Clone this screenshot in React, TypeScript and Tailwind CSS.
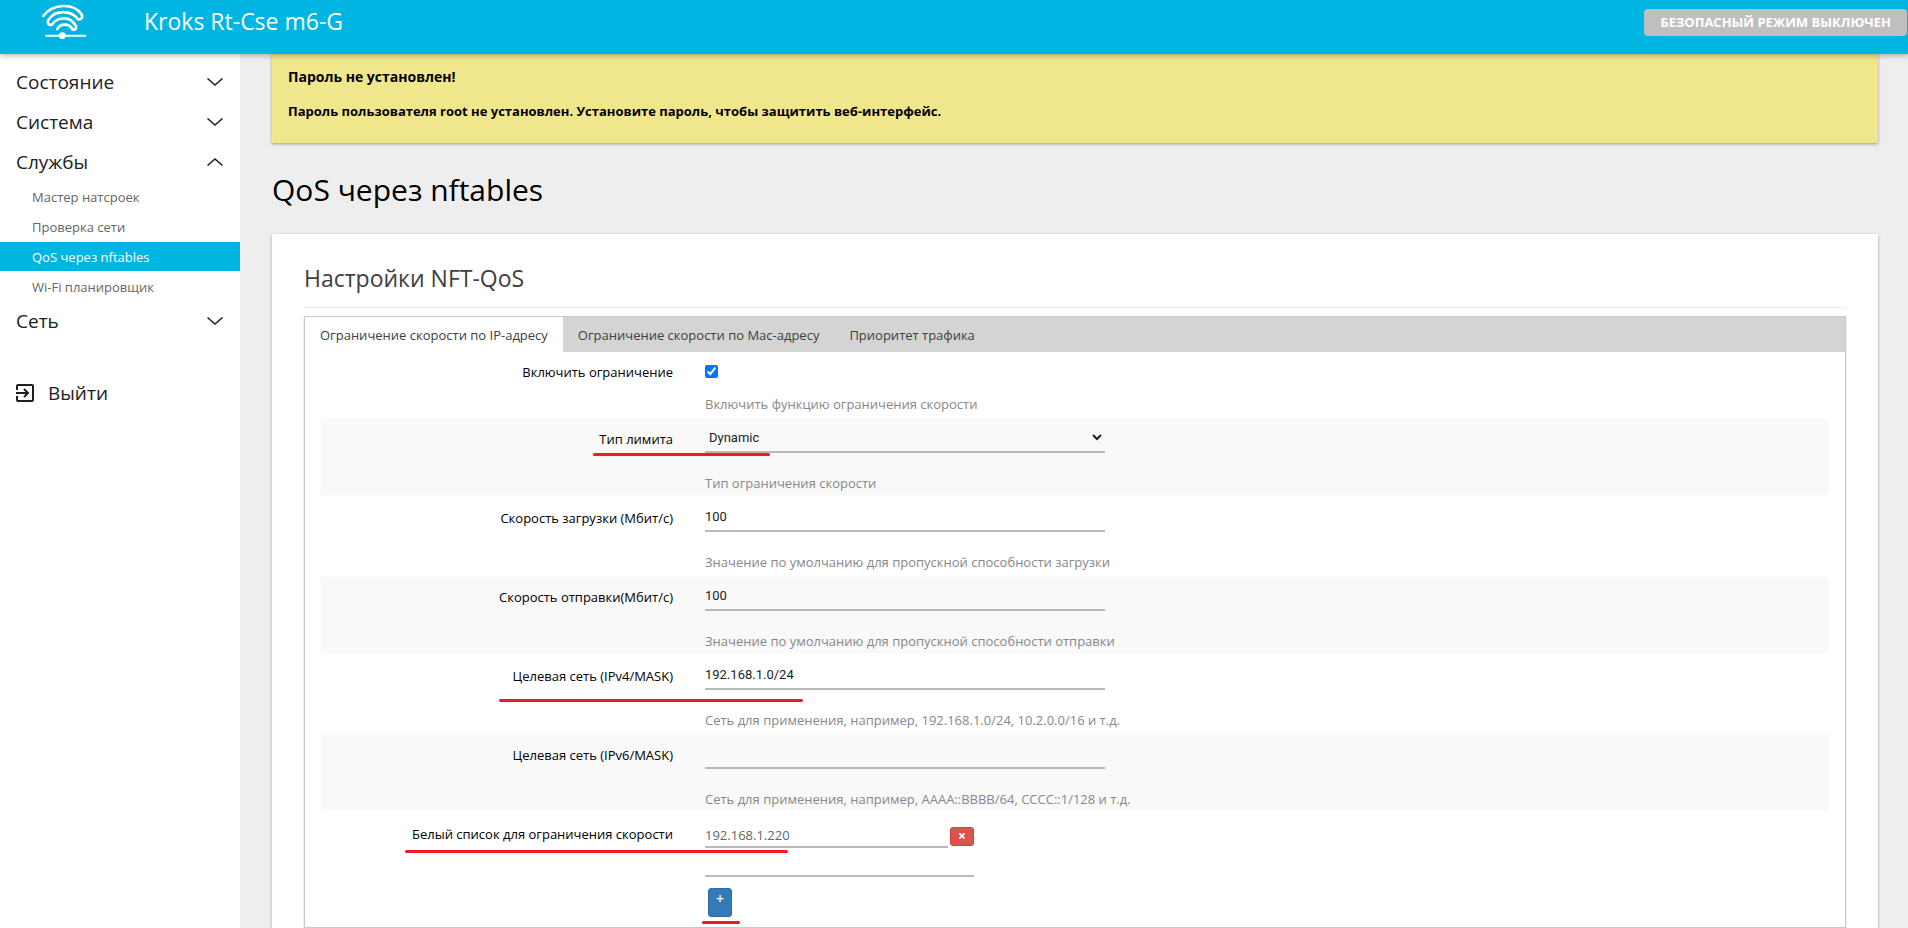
import { useState } from 'react';
import type { ReactNode } from 'react';

interface MenuSection {
  title: string;
  items?: string[];
}

const MENU: MenuSection[] = [
  { title: 'Состояние' },
  { title: 'Система' },
  { title: 'Службы', items: ['Мастер натсроек', 'Проверка сети', 'QoS через nftables', 'Wi-Fi планировщик'] },
  { title: 'Сеть' },
];

const TABS = ['Ограничение скорости по IP-адресу', 'Ограничение скорости по Mac-адресу', 'Приоритет трафика'];

const inputClass =
  'block h-8 w-full border-b-2 border-[#b9b9b9] bg-transparent pt-0.5 font-[Roboto,sans-serif] text-[13px] text-[#222] outline-none';

function Logo() {
  return (
    <svg
      width="60"
      height="44"
      viewBox="0 0 180 132"
      fill="none"
      stroke="#fff"
      strokeWidth="8"
      strokeLinecap="round"
      strokeLinejoin="round"
      aria-hidden="true"
    >
      <path d="M22 48C50 10 112 8 136 42c6 10 1 16-10 16C106 30 58 28 37 60c-5 9 0 17 11 14 15-24 50-24 65-5" />
      <path d="M113 69c12 12 8 20-3 20-10-21-38-19-46-2" />
      <path d="M30 107h118" strokeWidth="6" />
      <circle cx="79" cy="107" r="6" fill="#fff" />
    </svg>
  );
}

function Chevron({ open }: { open: boolean }) {
  return (
    <svg width="16" height="8" viewBox="0 0 16 8" fill="none" stroke="#1f1f23" strokeWidth="1.5" aria-hidden="true">
      {open ? <path d="M.5 7.5 8 1l7.500 6.500" /> : <path d="M.5.5 8 7 15.500.500" />}
    </svg>
  );
}

function ExitIcon() {
  return (
    <svg width="18" height="18" viewBox="0 0 18 18" fill="none" stroke="#1f1f23" strokeWidth="2" aria-hidden="true">
      <path d="M1 6V2q0-1 1-1h14q1 0 1 1v14q0 1-1 1H2q-1 0-1-1v-4M0 9h12M8 5l4 4-4 4" />
    </svg>
  );
}

interface RowProps {
  label: string;
  htmlFor: string;
  hint?: string;
  striped?: boolean;
  mark?: ReactNode;
  children: ReactNode;
}

function Row({ label, htmlFor, hint, striped = false, mark, children }: RowProps) {
  return (
    <div className={striped ? 'relative flex gap-8 bg-[#f9f9f9]' : 'relative flex gap-8'}>
      <label htmlFor={htmlFor} className="w-[352px] shrink-0 pt-2 text-right text-[13px] leading-6 text-black">
        {label}
      </label>
      <div className="min-w-0 flex-1">
        {children}
        {hint && <p className="text-[13px] leading-6 text-[#888]">{hint}</p>}
      </div>
      {mark}
    </div>
  );
}

export default function App() {
  const [active, setActive] = useState(0);

  return (
    <div className="flex h-screen flex-col overflow-hidden bg-[#eee] font-['Open_Sans','Noto_Sans',sans-serif] text-[#404040]">
      <header className="relative z-10 flex h-[54px] shrink-0 items-start bg-[#00b5e2] shadow-[0_2px_5px_rgba(0,0,0,0.26)]">
        <div className="flex w-36 shrink-0 pl-9">
          <Logo />
        </div>
        <a href="#" className="pt-[3px] text-[23px] leading-9 text-white">Kroks Rt-Cse m6-G</a>
        <button type="button" className="mt-[9px] mr-px ml-auto h-[27px] rounded-sm bg-[#bfbfbf] px-4 text-[13px] font-bold text-white">
          БЕЗОПАСНЫЙ РЕЖИМ ВЫКЛЮЧЕН
        </button>
      </header>

      <div className="flex min-h-0 flex-1">
        <nav className="w-60 shrink-0 bg-white pt-2 text-[#212121]">
          {MENU.map((section) => (
            <div key={section.title}>
              <button type="button" className="flex h-10 w-full items-center justify-between pr-[17px] pl-4 text-[19px]">
                {section.title}
                <Chevron open={Boolean(section.items)} />
              </button>
              {section.items && (
                <ul className="flex flex-col gap-px">
                  {section.items.map((item) => (
                    <li key={item}>
                      <a
                        href="#"
                        className={
                          item === 'QoS через nftables'
                            ? 'block h-[29px] bg-[#00b5e2] pl-8 text-[13px] leading-[31px] font-medium text-white'
                            : 'block h-[29px] pl-8 text-[13px] leading-[31px] text-[#666]'
                        }
                      >
                        {item}
                      </a>
                    </li>
                  ))}
                </ul>
              )}
            </div>
          ))}
          <a href="#" className="mt-8 flex h-10 items-center gap-3.5 pl-4 text-[19px]">
            <ExitIcon />
            Выйти
          </a>
        </nav>

        <main className="min-w-0 flex-1 pr-[30px] pl-8">
          <div className="h-[89px] bg-[#f0e68c] px-4 pt-[11px] font-bold text-black shadow-[0_1px_3px_rgba(0,0,0,0.35)]">
            <h4 className="text-sm leading-6">Пароль не установлен!</h4>
            <p className="pt-2.5 text-[13px] leading-6">
              Пароль пользователя root не установлен. Установите пароль, чтобы защитить веб-интерфейс.
            </p>
          </div>

          <h2 className="pt-6 text-[30px] leading-[46px] text-black">QoS через nftables</h2>

          <section className="mt-[21px] bg-white px-8 pt-6 pb-10 shadow-[0_1px_3px_rgba(0,0,0,0.3)]">
            <h3 className="border-b border-[#eee] pb-[9px] text-[23px] leading-10">Настройки NFT-QoS</h3>

            <div className="mt-2 border border-[#c8c8c8] shadow-[0_1px_1px_rgba(0,0,0,0.3)]">
              <div role="tablist" className="flex h-[35px] bg-[#d4d4d4]">
                {TABS.map((tab, i) => (
                  <button
                    key={tab}
                    type="button"
                    role="tab"
                    aria-selected={i === active}
                    onClick={() => setActive(i)}
                    className={i === active ? 'bg-white px-[15px] pt-0.5 text-[13px]' : 'px-[15px] pt-0.5 text-[13px]'}
                  >
                    {tab}
                  </button>
                ))}
              </div>

              <div className="flex flex-col gap-[3px] px-4">
                <Row label="Включить ограничение" htmlFor="enable" hint="Включить функцию ограничения скорости">
                  <div className="h-10 pt-[13px]">
                    <input id="enable" type="checkbox" defaultChecked className="block size-[13px]" />
                  </div>
                </Row>
                <Row
                  striped
                  label="Тип лимита"
                  htmlFor="type"
                  hint="Тип ограничения скорости"
                  mark={<span className="absolute top-[34px] left-[272px] h-[3px] w-[177px] rounded-full bg-[#ed1c24]" />}
                >
                  <div className="h-[52px] w-[400px] pt-0.5">
                    <select id="type" className={inputClass}>
                      <option>Dynamic</option>
                    </select>
                  </div>
                </Row>
                <Row label="Скорость загрузки (Мбит/с)" htmlFor="down" hint="Значение по умолчанию для пропускной способности загрузки">
                  <div className="h-[52px] w-[400px] pt-0.5">
                    <input id="down" defaultValue="100" className={inputClass} />
                  </div>
                </Row>
                <Row striped label="Скорость отправки(Мбит/с)" htmlFor="up" hint="Значение по умолчанию для пропускной способности отправки">
                  <div className="h-[52px] w-[400px] pt-0.5">
                    <input id="up" defaultValue="100" className={inputClass} />
                  </div>
                </Row>
                <Row
                  label="Целевая сеть (IPv4/MASK)"
                  htmlFor="net4"
                  hint="Сеть для применения, например, 192.168.1.0/24, 10.2.0.0/16 и т.д."
                  mark={<span className="absolute top-[43px] left-[178px] h-[3px] w-[304px] rounded-full bg-[#ed1c24]" />}
                >
                  <div className="h-[52px] w-[400px] pt-0.5">
                    <input id="net4" defaultValue="192.168.1.0/24" className={inputClass} />
                  </div>
                </Row>
                <Row
                  striped
                  label="Целевая сеть (IPv6/MASK)"
                  htmlFor="net6"
                  hint="Сеть для применения, например, AAAA::BBBB/64, CCCC::1/128 и т.д."
                >
                  <div className="h-[52px] w-[400px] pt-0.5">
                    <input id="net6" className={inputClass} />
                  </div>
                </Row>
                <Row
                  label="Белый список для ограничения скорости"
                  htmlFor="whitelist"
                  mark={<span className="absolute top-9 left-[84px] h-[3px] w-[383px] rounded-full bg-[#ed1c24]" />}
                >
                  <div className="w-[269px] pt-2.5">
                    <div className="flex items-center gap-0.5">
                      <span className="flex-1 border-b-2 border-[#b9b9b9] text-[13px] leading-[22px] text-[#666]">192.168.1.220</span>
                      <button
                        type="button"
                        aria-label="Удалить"
                        className="flex h-[19px] w-6 items-center justify-center rounded-[3px] border border-[#d43f3a] bg-[#d9534f] text-sm leading-none font-bold text-white"
                      >
                        ×
                      </button>
                    </div>
                    <input
                      id="whitelist"
                      className="block h-[29px] w-full border-b-2 border-[#b9b9b9] bg-transparent text-[13px] outline-none"
                    />
                    <div className="relative mt-[11px] mb-2.5 ml-[3px] w-6">
                      <button
                        type="button"
                        aria-label="Добавить"
                        className="flex h-[29px] w-6 justify-center rounded-[3px] border border-[#2e6da4] bg-[#337ab7] text-sm leading-5 font-semibold text-white"
                      >
                        +
                      </button>
                      <span className="absolute top-[33px] -left-1.5 h-[3px] w-[38px] rounded-full bg-[#ed1c24]" />
                    </div>
                  </div>
                </Row>
              </div>
            </div>
          </section>
        </main>
      </div>
    </div>
  );
}
